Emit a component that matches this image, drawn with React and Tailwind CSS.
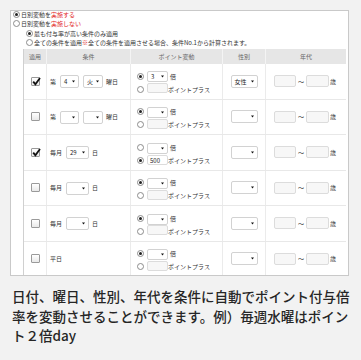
import React from "react";

const jp = "font-['Noto_Sans_CJK_JP','Noto_Sans',sans-serif]";

function Radio({ on }) {
  return (
    <span className="inline-flex w-[7px] h-[7px] shrink-0 rounded-full border border-[#8c8c8c] bg-white items-center justify-center">
      {on && <span className="w-[3px] h-[3px] rounded-full bg-[#222]" />}
    </span>
  );
}

function Check({ on }) {
  return (
    <span className="relative inline-flex w-[9px] h-[9px] shrink-0 rounded-[1px] border border-[#9a9a9a] bg-gradient-to-b from-white to-[#e9e9e9]">
      {on && (
        <svg className="absolute left-[0px] top-[-1px]" width="9" height="9" viewBox="0 0 9 9">
          <path d="M1.2 4.6 L3.4 7.2 L8 1" fill="none" stroke="#111" strokeWidth="1.8" />
        </svg>
      )}
    </span>
  );
}

function Arrow() {
  return (
    <svg width="3" height="3" viewBox="0 0 3 3" className="shrink-0">
      <path d="M0 0.5 H3 L1.5 2.6 Z" fill="#111" />
    </svg>
  );
}

function Select({ w, h = "h-[13px]", value }) {
  return (
    <span className={`inline-flex ${w} ${h} shrink-0 items-center justify-between rounded-[2px] border border-[#d2d2d2] bg-white pl-[3px] pr-[3px] text-[6px] text-[#222]`}>
      <span>{value}</span>
      <Arrow />
    </span>
  );
}

function Input({ w, h = "h-[12px]", value, filled }) {
  return (
    <span className={`inline-flex ${w} ${h} shrink-0 items-center rounded-[2px] border border-[#dcdcdc] ${filled ? "bg-white" : "bg-[#f7f7f7]"} pl-[2px] text-[6px] text-[#222]`}>
      {value}
    </span>
  );
}

function Cond({ kind, sel1, sel2, day }) {
  if (kind === "week") {
    return (
      <div className="flex items-center pl-[3px] text-[6px] text-[#333]">
        <span>第</span>
        <span className="ml-[4px]"><Select w="w-[19px]" value={sel1} /></span>
        <span className="ml-[4px]"><Select w="w-[20px]" value={sel2} /></span>
        <span className="ml-[3px]">曜日</span>
      </div>
    );
  }
  if (kind === "month") {
    return (
      <div className="flex items-center pl-[3px] text-[6px] text-[#333]">
        <span>毎月</span>
        <span className="ml-[4px]"><Select w="w-[23px]" value={day} /></span>
        <span className="ml-[3px]">日</span>
      </div>
    );
  }
  return <div className="flex items-center pl-[3px] text-[6px] text-[#333]">平日</div>;
}

function Points({ mode, mult, plus }) {
  return (
    <div className="flex flex-col gap-[3px] pl-[6px] pt-[3px] text-[6px] text-[#333]">
      <div className="flex items-center h-[10px]">
        <Radio on={mode === "mult"} />
        <span className="ml-[3px]"><Select w="w-[21px]" h="h-[11px]" value={mult} /></span>
        <span className="ml-[2px]">倍</span>
      </div>
      <div className="flex items-center h-[10px]">
        <Radio on={mode === "plus"} />
        <span className="ml-[3px]"><Input w="w-[21px]" h="h-[10px]" value={plus} filled={!!plus} /></span>
        <span className="ml-[0px]">ポイントプラス</span>
      </div>
    </div>
  );
}

const rows = [
  { on: true, cond: { kind: "week", sel1: "4", sel2: "火" }, pts: { mode: "mult", mult: "3" }, sex: "女性" },
  { on: false, cond: { kind: "week" }, pts: { mode: "mult" } },
  { on: true, cond: { kind: "month", day: "29" }, pts: { mode: "plus", plus: "500" } },
  { on: false, cond: { kind: "month" }, pts: { mode: "mult" } },
  { on: false, cond: { kind: "month" }, pts: { mode: "mult" } },
  { on: false, cond: { kind: "plain" }, pts: { mode: "mult" } },
];

const cols = "grid grid-cols-[23px_84px_92px_43px_80px]";

export default function App() {
  return (
    <div className={`w-[361px] h-[360px] overflow-hidden bg-[#f2f2f2] pt-[10px] pl-[10px] ${jp}`}>
      <div className="w-[339px] h-[266px] overflow-hidden border border-[#c9c9c9] bg-white">
        <div className="-mt-[1px] text-[6px] text-[#333]">
          <div className="flex items-center h-[9.25px] pl-[2px] gap-[1px]">
            <Radio on />
            <span>日別変動を<span className="text-[#e2231a]">実施する</span></span>
          </div>
          <div className="flex items-center h-[9.25px] pl-[2px] gap-[1px]">
            <Radio />
            <span>日別変動を<span className="text-[#e2231a]">実施しない</span></span>
          </div>
          <div className="flex items-center h-[9.25px] pl-[15px] gap-[1px]">
            <Radio on />
            <span>最も付与率が高い条件のみ適用</span>
          </div>
          <div className="flex items-center h-[9.25px] pl-[15px] gap-[1px]">
            <Radio />
            <span>全ての条件を適用<span className="text-[#e2231a]">※</span>全ての条件を適用させる場合、条件No.1から計算されます。</span>
          </div>
        </div>
        <div className="ml-[12px] mt-[2px] w-[323px] border-l border-[#d0d0d0]">
          <div className={`${cols} h-[15px] bg-[#e6e6e6] text-[6px] text-[#666]`}>
            <div className="flex items-center justify-center border-r border-[#f4f4f4]">適用</div>
            <div className="flex items-center justify-center border-r border-[#f4f4f4]">条件</div>
            <div className="flex items-center justify-center border-r border-[#f4f4f4]">ポイント変動</div>
            <div className="flex items-center justify-center border-r border-[#f4f4f4]">性別</div>
            <div className="flex items-center justify-center">年代</div>
          </div>
          {rows.map((r, i) => (
            <div key={i} className={`${cols} h-[35.5px] border-b border-[#e8e8e8]`}>
              <div className="flex items-center justify-center border-r border-[#ebebeb]">
                <Check on={r.on} />
              </div>
              <div className="flex items-center border-r border-[#ebebeb]">
                <Cond {...r.cond} />
              </div>
              <div className="flex items-center border-r border-[#ebebeb]">
                <Points {...r.pts} />
              </div>
              <div className="flex items-center justify-center border-r border-[#ebebeb]">
                <Select w="w-[27px]" value={r.sex || ""} />
              </div>
              <div className="flex items-center pl-[8px] text-[6px] text-[#333]">
                <Input w="w-[22px]" />
                <span className="mx-[2px]">〜</span>
                <Input w="w-[23px]" />
                <span className="ml-[1px]">歳</span>
              </div>
            </div>
          ))}
        </div>
      </div>
      <p className="mt-[11px] ml-[2px] w-[338px] text-[13.5px] leading-[19.5px] font-medium text-[#262626]">
        日付、曜日、性別、年代を条件に自動でポイント付与倍率を変動させることができます。例）毎週水曜はポイント２倍day
      </p>
    </div>
  );
}
